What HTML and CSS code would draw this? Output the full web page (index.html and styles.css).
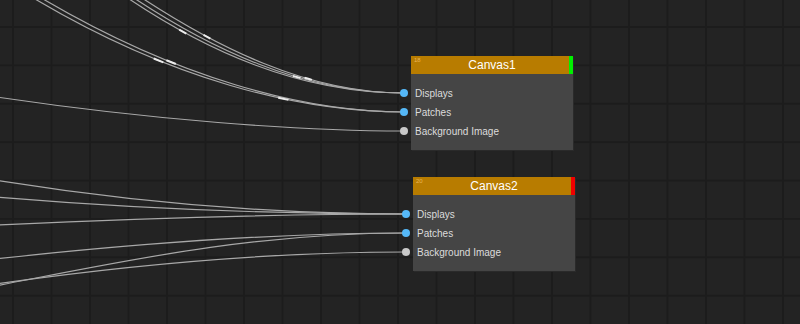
FILE: index.html
```html
<!DOCTYPE html>
<html lang="en">
<head>
    <meta charset="UTF-8">
    <title>Node Graph</title>
    <link rel="stylesheet" href="styles.css">
</head>
<body>
    <div class="graph">
        <svg class="wires" width="800" height="324" viewBox="0 0 800 324">
            <g class="wire">
                <!-- Canvas1 inputs -->
                <path d="M 116 -10 C 205 52, 300 93, 404 93"/>
                <path d="M 122 -10 C 210 50, 304 93, 404 93"/>
                <path d="M 130 -10 C 216 48, 308 93, 404 93"/>
                <path d="M 30 -4 C 170 80, 300 112, 404 112"/>
                <path d="M 38 -4 C 176 78, 304 112, 404 112"/>
                <path d="M -10 96 C 150 120, 300 131, 404 131"/>
                <!-- Canvas2 inputs -->
                <path d="M -5 180 C 150 205, 290 214, 406 214"/>
                <path d="M -5 197 C 150 210, 290 214, 406 214"/>
                <path d="M -5 225 C 150 218, 290 214, 406 214"/>
                <path d="M -5 259 C 150 242, 290 233, 406 233"/>
                <path d="M -5 286 C 120 262, 250 233, 406 233"/>
                <path d="M -5 284 C 150 262, 290 252, 406 252"/>
            </g>
            <g class="spark">
                <path class="at-24" pathLength="100" d="M 116 -10 C 205 52, 300 93, 404 93"/>
                <path class="at-29" pathLength="100" d="M 130 -10 C 216 48, 308 93, 404 93"/>
                <path class="at-63" pathLength="100" d="M 122 -10 C 210 50, 304 93, 404 93"/>
                <path class="at-66" pathLength="100" d="M 130 -10 C 216 48, 308 93, 404 93"/>
                <path class="at-35" pathLength="100" d="M 30 -4 C 170 80, 300 112, 404 112"/>
                <path class="at-37" pathLength="100" d="M 38 -4 C 176 78, 304 112, 404 112"/>
                <path class="at-68" pathLength="100" d="M 30 -4 C 170 80, 300 112, 404 112"/>
            </g>
        </svg>

        <div class="node node-one">
            <div class="node-head">
                <span class="node-id">18</span>
                <span class="node-title">Canvas1</span>
                <span class="node-flag flag-ok"></span>
            </div>
            <div class="node-body">
                <div class="port"><span class="dot dot-blue"></span>Displays</div>
                <div class="port"><span class="dot dot-blue"></span>Patches</div>
                <div class="port"><span class="dot dot-grey"></span>Background Image</div>
            </div>
        </div>

        <div class="node node-two">
            <div class="node-head">
                <span class="node-id">20</span>
                <span class="node-title">Canvas2</span>
                <span class="node-flag flag-err"></span>
            </div>
            <div class="node-body">
                <div class="port"><span class="dot dot-blue"></span>Displays</div>
                <div class="port"><span class="dot dot-blue"></span>Patches</div>
                <div class="port"><span class="dot dot-grey"></span>Background Image</div>
            </div>
        </div>
    </div>
</body>
</html>
```

FILE: styles.css
```css
body {
    margin: 0;
    background-color: #222;
    font-family: "Liberation Sans", Arial, sans-serif;
}
.graph {
    position: relative;
    width: 800px;
    height: 324px;
    overflow: hidden;
    background-color: #232323;
    background-image:
        linear-gradient(to right, #1c1c1c 2px, transparent 2px),
        linear-gradient(to bottom, #1c1c1c 2px, transparent 2px);
    background-size: 38.5px 38.4px;
    background-position: 12px 26px;
}
.wires {
    position: absolute;
    left: 0;
    top: 0;
}
.wire path {
    fill: none;
    stroke: #a8a8a8;
    stroke-width: 1.2;
}
.spark path {
    fill: none;
    stroke: #ececec;
    stroke-width: 2;
    stroke-dasharray: 2.6 200;
}
.spark .at-24 { stroke-dashoffset: -24; }
.spark .at-29 { stroke-dashoffset: -29; }
.spark .at-35 { stroke-dashoffset: -35; }
.spark .at-37 { stroke-dashoffset: -37; }
.spark .at-63 { stroke-dashoffset: -63; }
.spark .at-66 { stroke-dashoffset: -66; }
.spark .at-68 { stroke-dashoffset: -68; }
.node {
    position: absolute;
    width: 162px;
    background-color: #454545;
    box-shadow: 1px 1px 0 #2a2a2a;
}
.node-one {
    left: 411px;
    top: 56px;
}
.node-two {
    left: 413px;
    top: 177px;
}
.node-head {
    position: relative;
    height: 18px;
    background-color: #b87c00;
    display: flex;
    align-items: center;
    justify-content: center;
}
.node-title {
    color: #fff;
    font-size: 12px;
}
.node-id {
    position: absolute;
    left: 3px;
    top: 1px;
    font-size: 6px;
    color: #e8b458;
}
.node-flag {
    position: absolute;
    right: 0;
    top: 0;
    width: 4px;
    height: 18px;
}
.flag-ok {
    background-color: #00f000;
}
.flag-err {
    background-color: #f00000;
}
.node-body {
    height: 76px;
    padding-top: 10px;
    box-sizing: border-box;
}
.port {
    position: relative;
    height: 19px;
    line-height: 19px;
    padding-left: 4px;
    font-size: 10px;
    color: #dcdcdc;
}
.dot {
    position: absolute;
    left: -11px;
    top: 5px;
    width: 8px;
    height: 8px;
    border-radius: 50%;
}
.dot-blue {
    background-color: #55b8f8;
}
.dot-grey {
    background-color: #c8c8c8;
}
```
